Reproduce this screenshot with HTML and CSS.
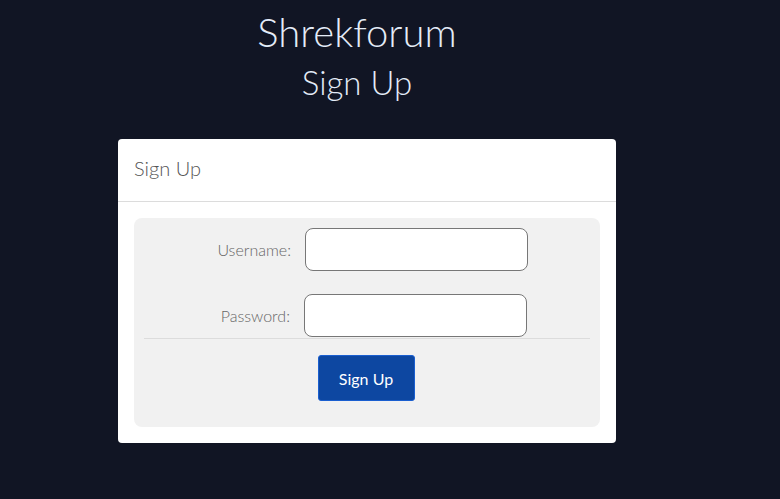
FILE: index.html
```html
<!DOCTYPE html>
<html>
<head>
<meta charset="utf-8">
<link rel="stylesheet" href="styles.css">
</head>
<body>
<div class="page">
  <h1 class="title">Shrekforum</h1>
  <h2 class="subtitle">Sign Up</h2>
  <div class="card">
    <div class="card-header">Sign Up</div>
    <div class="card-body">
      <form class="form">
        <div class="row">
          <label class="label" for="u">Username:</label>
          <input class="input" id="u" type="text">
        </div>
        <div class="row row-pw">
          <label class="label" for="p">Password:</label>
          <input class="input" id="p" type="password">
        </div>
        <div class="actions">
          <button class="btn" type="button">Sign Up</button>
        </div>
      </form>
    </div>
  </div>
</div>
</body>
</html>
```

FILE: styles.css
```css
html, body {
  margin: 0;
  padding: 0;
  background: #111524;
  font-family: "Lato", "Open Sans", sans-serif;
  font-weight: 300;
}
.page {
  width: 714px;
  display: flex;
  flex-direction: column;
  align-items: center;
}
.title {
  margin: 10px 0 0;
  font-size: 40px;
  line-height: 44px;
  font-weight: 300;
  color: #e4ecf8;
}
.subtitle {
  margin: 10px 0 0;
  font-size: 33px;
  line-height: 36px;
  font-weight: 300;
  color: #e4ecf8;
}
.card {
  align-self: flex-start;
  margin: 39px 0 0 118px;
  width: 498px;
  background: #fff;
  border-radius: 4px;
}
.card-header {
  height: 63px;
  padding-left: 16px;
  padding-bottom: 4px;
  box-sizing: border-box;
  display: flex;
  align-items: center;
  font-size: 20px;
  color: #555;
  border-bottom: 1px solid #dcdcdc;
}
.card-body {
  padding: 16px;
}
.form {
  background: #f1f1f1;
  border-radius: 8px;
  padding: 10px 10px 26px;
  display: flex;
  flex-direction: column;
}
.row {
  display: flex;
  align-items: center;
  height: 43px;
}
.row-pw {
  margin-top: 23px;
}
.label {
  width: 161px;
  text-align: right;
  padding-right: 14px;
  box-sizing: border-box;
  font-size: 16px;
  color: #666;
}
.row-pw .label {
  width: 160px;
}
.input {
  width: 223px;
  height: 43px;
  box-sizing: border-box;
  border: 1px solid #777;
  border-radius: 8px;
  background: #fff;
  margin: 0;
}
.actions {
  border-top: 1px solid #dcdcdc;
  margin-top: 1px;
  padding-top: 16px;
  display: flex;
  justify-content: center;
  padding-right: 2px;
}
.btn {
  width: 97px;
  height: 46px;
  background: #0d47a1;
  border: 1px solid #1a5fd0;
  border-radius: 3px;
  color: #fff;
  font-family: "Lato", "Open Sans", sans-serif;
  font-weight: 400;
  font-size: 16px;
}
```
